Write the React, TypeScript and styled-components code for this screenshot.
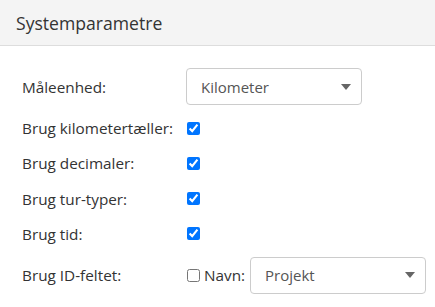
import { FC } from "react";

import styled, { createGlobalStyle } from "styled-components";

const GlobalStyle = createGlobalStyle`
  body {
    margin: 0;
    background: #ffffff;
    font-family: "Open Sans", "Liberation Sans", sans-serif;
    color: #333333;
  }
`;

interface SelectProp {
  value: string;
  width: number;
}

const Select: FC<SelectProp> = ({ value, width }) => (
  <SelectBox style={{ width }}>
    <span>{value}</span>
    <Caret />
  </SelectBox>
);

const App: FC = () => {
  return (
    <>
      <GlobalStyle />
      <Panel>
        <Header>Systemparametre</Header>

        <Form>
          <Row>
            <Label>Måleenhed:</Label>
            <Select value="Kilometer" width={176} />
          </Row>

          <Row>
            <Label>Brug kilometertæller:</Label>
            <Check type="checkbox" checked readOnly />
          </Row>

          <Row>
            <Label>Brug decimaler:</Label>
            <Check type="checkbox" checked readOnly />
          </Row>

          <Row>
            <Label>Brug tur-typer:</Label>
            <Check type="checkbox" checked readOnly />
          </Row>

          <Row>
            <Label>Brug tid:</Label>
            <Check type="checkbox" checked readOnly />
          </Row>

          <Row>
            <Label>Brug ID-feltet:</Label>
            <Check type="checkbox" readOnly />
            <Inline>Navn:</Inline>
            <Select value="Projekt" width={176} />
          </Row>
        </Form>
      </Panel>
    </>
  );
};

const Panel = styled.div`
  width: 435px;
  height: 307px;
  overflow: hidden;
`;

const Header = styled.div`
  height: 45px;
  padding-left: 16px;
  display: flex;
  align-items: center;

  background: #f4f4f4;
  border-bottom: 1px solid #dddddd;

  font-size: 17.6px;
  color: #333333;
`;

const Form = styled.div`
  padding: 22px 0 0 22px;

  display: flex;
  flex-direction: column;
  gap: 11.2px;
`;

const Row = styled.div`
  min-height: 24px;
  display: flex;
  align-items: center;
`;

const Label = styled.span`
  width: 164px;
  font-size: 15.3px;
  color: #333333;
`;

const Check = styled.input`
  width: 13px;
  height: 13px;
  margin: 0 0 0 1px;
`;

const Inline = styled.span`
  margin: 0 5px 0 4px;
  font-size: 15.3px;
  color: #333333;
`;

const SelectBox = styled.div`
  box-sizing: border-box;
  height: 37px;
  padding: 0 10px 0 14px;

  display: flex;
  align-items: center;
  justify-content: space-between;

  border: 1px solid #cccccc;
  border-radius: 4px;
  background: #ffffff;

  font-size: 15px;
  color: #555555;
`;

const Caret = styled.span`
  width: 0;
  height: 0;
  border-left: 5px solid transparent;
  border-right: 5px solid transparent;
  border-top: 6px solid #666666;
`;

export default App;
